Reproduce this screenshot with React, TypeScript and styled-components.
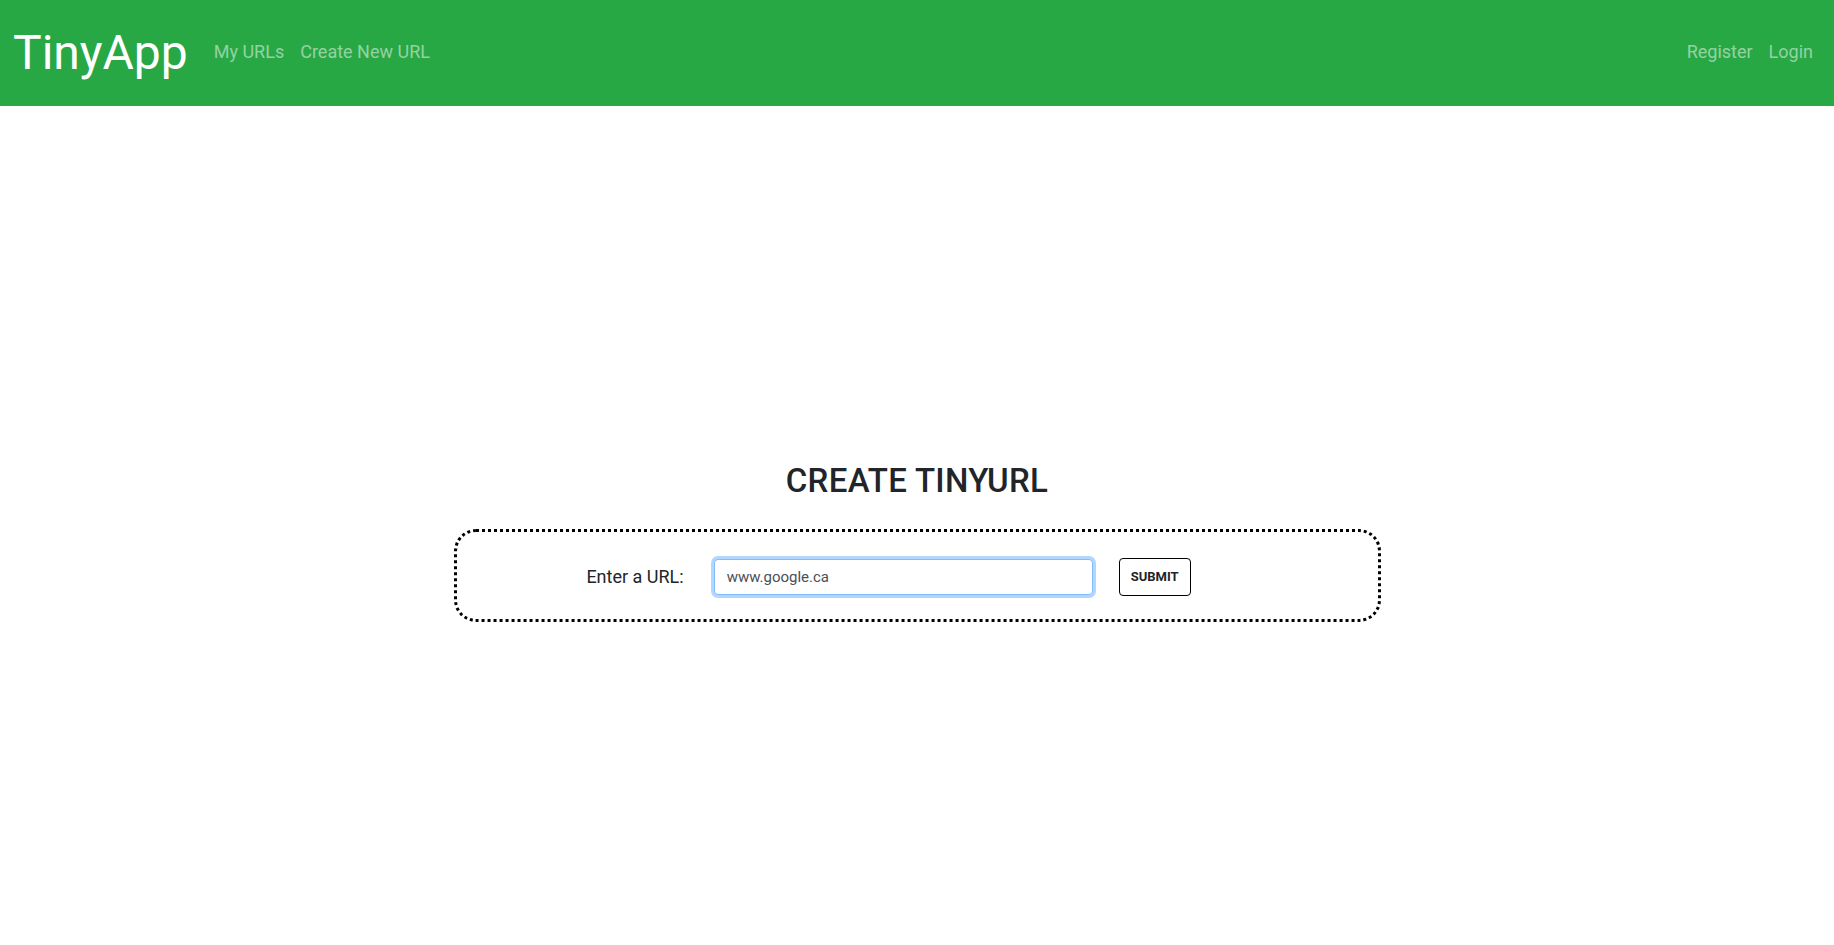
import React from "react";
import styled, { createGlobalStyle } from "styled-components";

const GlobalStyle = createGlobalStyle`
  html, body { margin: 0; padding: 0; background: #fff; }
  body { font-family: Roboto, "Noto Sans", sans-serif; color: #212529; }
  * { box-sizing: border-box; }
`;

const Page = styled.div`
  min-height: 945px;
  display: flex;
  flex-direction: column;
`;

const NavBar = styled.nav`
  height: 106px;
  background: #28a745;
  display: flex;
  align-items: center;
  padding: 0 21px 4px 13px;
`;

const Brand = styled.a`
  color: #fff;
  font-size: 48px;
  font-weight: 400;
  text-decoration: none;
  margin-right: 26px;
  margin-top: 2px;
`;

const NavList = styled.div<{ $right?: boolean }>`
  display: flex;
  gap: 16px;
  margin-left: ${(p) => (p.$right ? "auto" : "0")};
`;

const NavLink = styled.a`
  color: rgba(255, 255, 255, 0.5);
  font-size: 18px;
  text-decoration: none;
`;

const Main = styled.main`
  display: flex;
  flex-direction: column;
  align-items: center;
  padding-top: 355px;
`;

const Title = styled.h2`
  margin: 0 0 28px;
  font-size: 33px;
  font-weight: 500;
  letter-spacing: 0.3px;
  color: #212529;
  line-height: 1.2;
`;

const FormBox = styled.form`
  width: 927px;
  height: 93px;
  border: 3px dotted #000;
  border-radius: 22px;
  display: flex;
  align-items: center;
  justify-content: center;
  padding-right: 57px;
  padding-top: 3px;
`;

const Label = styled.label`
  font-size: 18px;
  color: #212529;
  margin-right: 30px;
`;

const UrlInput = styled.input`
  width: 379px;
  height: 36px;
  padding: 6px 12px;
  font-family: inherit;
  font-size: 15px;
  color: #495057;
  border: 1px solid #80bdff;
  border-radius: 4px;
  box-shadow: 0 0 0 3px rgba(0, 123, 255, 0.3);
  outline: none;
  margin-right: 26px;
`;

const SubmitButton = styled.button`
  width: 72px;
  height: 38px;
  background: #fff;
  border: 1px solid #000;
  border-radius: 4px;
  font-family: inherit;
  font-size: 13px;
  font-weight: 700;
  color: #212529;
  cursor: pointer;
`;

export default function App() {
  return (
    <Page>
      <GlobalStyle />
      <NavBar>
        <Brand href="#">TinyApp</Brand>
        <NavList>
          <NavLink href="#">My URLs</NavLink>
          <NavLink href="#">Create New URL</NavLink>
        </NavList>
        <NavList $right>
          <NavLink href="#">Register</NavLink>
          <NavLink href="#">Login</NavLink>
        </NavList>
      </NavBar>
      <Main>
        <Title>CREATE TINYURL</Title>
        <FormBox onSubmit={(e) => e.preventDefault()}>
          <Label htmlFor="longURL">Enter a URL:</Label>
          <UrlInput id="longURL" defaultValue="www.google.ca" />
          <SubmitButton type="submit">SUBMIT</SubmitButton>
        </FormBox>
      </Main>
    </Page>
  );
}
